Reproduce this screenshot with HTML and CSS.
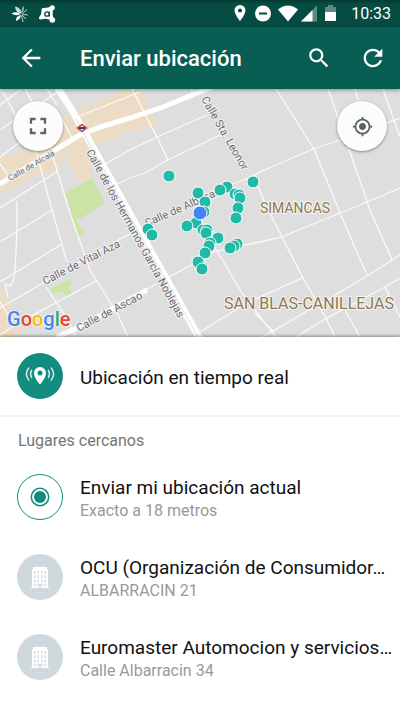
FILE: index.html
```html
<!DOCTYPE html>
<html lang="es">

<head>
    <meta charset="UTF-8">
    <meta name="viewport" content="width=device-width, initial-scale=1.0">
    <title>Enviar ubicación</title>
    <link rel="stylesheet" href="styles.css">
</head>

<body>

    <!-- Barra de estado -->
    <div class="status-bar">
        <div class="status-left">
            <svg width="18" height="18" viewBox="0 0 18 18" fill="#fff">
                <path d="M10.500 8.500Q4.500 8 4 1.500Q10 2.500 10.500 8.500Z" opacity=".8"/>
                <path d="M10.500 8.500Q10 4 12.500 1Q14 5 10.500 8.500Z" opacity=".6"/>
                <path d="M10 9Q5 6 .500 8.500Q5 11.500 10 9Z"/>
                <path d="M10 10Q4.500 11 5 16Q9.500 14.500 10 10Z"/>
                <path d="M11 9L16 4.500M11.500 9.500L17 10M11 10L15 14M10.500 10.500L12 17" stroke="#fff" stroke-width="1" opacity=".75"/>
            </svg>
            <svg width="18" height="18" viewBox="0 0 18 18">
                <path d="M5 4.500Q9 5 14 3Q12 9 14.500 15Q10 11 2.500 13Q5.500 9 5 4.500Z" fill="#fff" stroke="#fff" stroke-width="3" stroke-linejoin="round"/>
                <circle cx="14.300" cy="2.800" r="2.500" fill="#fff"/>
                <circle cx="14.300" cy="15" r="2.800" fill="#fff"/>
                <path d="M11.300 6.500V11.500" stroke="#054c43" stroke-width="1.300"/>
                <circle cx="9" cy="9" r="2.200" fill="none" stroke="#054c43" stroke-width="1.300"/>
            </svg>
        </div>
        <div class="status-right">
            <svg class="pin" width="12" height="17" viewBox="0 0 12 17">
                <path d="M6 0A5.500 5.500 0 0 0 .500 5.500C.500 9.500 6 16 6 16S11.500 9.500 11.500 5.500A5.500 5.500 0 0 0 6 0ZM6 7.500A2 2 0 1 1 6 3.500A2 2 0 0 1 6 7.500Z" fill="#fff"/>
            </svg>
            <svg class="silent" width="16" height="17" viewBox="0 0 16 17">
                <circle cx="8" cy="8.500" r="8" fill="#fff"/>
                <path d="M4 8.500H12" stroke="#054c43" stroke-width="2"/>
            </svg>
            <svg width="20" height="17" viewBox="0 0 20 17">
                <path d="M0 4.500Q10-3.500 20 4.500L10 16.500Z" fill="#fff"/>
            </svg>
            <svg width="16" height="17" viewBox="0 0 16 17">
                <path d="M0 16.500L16 .500V16.500Z" fill="#fff" opacity=".35"/>
                <path d="M0 16.500L11.500 5V16.500Z" fill="#fff"/>
            </svg>
            <svg class="battery" width="11" height="17" viewBox="0 0 11 17">
                <path d="M0 2H3V0H8V2H11V7H0Z" fill="#fff" opacity=".35"/>
                <path d="M0 7H11V16H0Z" fill="#fff"/>
            </svg>
            <span class="clock">10:33</span>
        </div>
    </div>

    <!-- Cabecera -->
    <header class="app-bar">
        <button class="icon-btn" aria-label="Volver">
            <svg width="28" height="28" viewBox="0 0 24 24"><path d="M20 11H7.830l5.590-5.590L12 4l-8 8 8 8 1.410-1.410L7.830 13H20v-2z" fill="#fff"/></svg>
        </button>
        <h1>Enviar ubicación</h1>
        <button class="icon-btn" aria-label="Buscar">
            <svg width="26" height="26" viewBox="0 0 24 24"><path d="M15.500 14h-.790l-.280-.270C15.410 12.590 16 11.110 16 9.500 16 5.910 13.090 3 9.500 3S3 5.910 3 9.500 5.910 16 9.500 16c1.610 0 3.090-.590 4.230-1.570l.270.280v.790l5 4.990L20.490 19l-4.990-5zm-6 0C7.010 14 5 11.990 5 9.500S7.010 5 9.500 5 14 7.010 14 9.500 11.990 14 9.500 14z" fill="#fff"/></svg>
        </button>
        <button class="icon-btn" aria-label="Actualizar">
            <svg width="28" height="28" viewBox="0 0 24 24"><path d="M17.650 6.350C16.200 4.900 14.210 4 12 4c-4.420 0-7.990 3.580-7.990 8s3.570 8 7.990 8c3.730 0 6.840-2.550 7.730-6h-2.080c-.820 2.330-3.040 4-5.650 4-3.310 0-6-2.690-6-6s2.690-6 6-6c1.660 0 3.140.690 4.220 1.780L13 11h7V4l-2.350 2.350z" fill="#fff"/></svg>
        </button>
    </header>

    <!-- Mapa -->
    <section class="map">
        <svg class="map-canvas" viewBox="0 0 400 248" preserveAspectRatio="xMidYMid slice">
            <!-- Zonas comerciales y parques -->
            <g fill="#ecdcc6">
                <path d="M82 19L128 0H140L158 33L150 41L138 41L127 43L113 51L90 56L92 89L80 94L63 61L58 86L43 84L33 89L20 94L0 106V69L20 63L63 29Z"/>
                <path d="M0 198L7 208L10 218L25 241L15 248H0Z"/>
            </g>
            <g fill="#cbe4a5">
                <path d="M65 104L92 89L105 114L76 132L86 144L78 148Z"/>
                <path d="M50 200L71 189L72 195L68 199L72 204L68 208L63 203L53 204Z"/>
            </g>

            <!-- Calles pequeñas -->
            <g class="streets">
                <path d="M0 16L20 1M0 41L37 16L62 1M0 68L20 53L56 29M3 3L37 66L52 121L67 173M25 0L45 38L53 68L70 124L90 181L117 224L128 248"/>
                <path d="M47 0L57 16M60 26L72 49M0 75L8 86M0 119L58 82M77 28L140 3M103 76L130 61L157 48L207 26M115 96L130 89L147 83L168 71L220 46M132 0L157 48L168 71M192 0V8"/>
                <path d="M0 153L52 121M0 193L62 155M17 112V140L15 181Q14 194 10 197L5 195L8 209M0 219L43 194L122 149L132 144M46 198L68 231L76 248M0 246L20 233L37 224L98 191M0 213L12 232"/>
                <path d="M230 96L253 87L260 83L313 60L340 51L400 29M253 87L265 113M276 0L314 60L340 124M340 124L367 186M328 0L350 63L370 121L392 171M355 0L358 11M383 0L400 48"/>
                <path d="M145 201L167 189L197 173L213 163L240 157L260 153L282 148L340 124L367 113L400 99M262 108L282 148L303 189L326 229L335 248M200 243L247 214L302 189M400 166L367 187L330 209L273 242L262 248"/>
                <path d="M400 189L385 198L327 229L296 248M385 198L400 228M255 224L273 242M345 221L360 248M213 156L220 167L242 204L268 238L276 248"/>
            </g>

            <!-- Avenidas -->
            <g class="avenues">
                <path d="M0 95L55 61L80 46L100 38L130 29L163 18L212 -2"/>
                <path class="wide" d="M57 -2L72 21L86 46L200 250"/>
                <path d="M57 248L77 239L147 201"/>
            </g>
            <path d="M76 30L90 56L199 250" fill="none" stroke="#dedede" stroke-width="1"/>

            <!-- Metro -->
            <path d="M82 35.500L86.500 39L82 42.500L77.500 39Z" fill="#fff" stroke="#e0392f" stroke-width="1.500"/>
            <path d="M79 37.800H85V40.300H79Z" fill="#1b4f91"/>

            <!-- Nombres de las calles -->
            <g class="street-names">
                <text class="small" transform="translate(10 92) rotate(-30)">Calle de Alcalá</text>
                <text transform="translate(86 63) rotate(61)">Calle de los Hermanos García Noblejas</text>
                <text transform="translate(201 10) rotate(60)">Calle Sta. Leonor</text>
                <text transform="translate(147 138) rotate(-24)">Calle de Albasanz</text>
                <text transform="translate(45 196) rotate(-27)">Calle de Vital Aza</text>
                <text transform="translate(79 243) rotate(-28)">Calle de Ascao</text>
            </g>
            <g class="districts">
                <text x="260" y="124">SIMANCAS</text>
                <text class="big" x="224" y="220">SAN BLAS-CANILLEJAS</text>
            </g>

            <!-- Lugares -->
            <g class="places">
                <circle cx="169" cy="87" r="6"/>
                <circle cx="198" cy="104" r="6"/>
                <circle cx="227" cy="98" r="6"/>
                <circle cx="220" cy="101" r="6"/>
                <circle cx="253" cy="93" r="6"/>
                <circle cx="235" cy="105" r="6"/>
                <circle cx="239" cy="106" r="6"/>
                <circle cx="240" cy="109" r="6"/>
                <circle cx="238" cy="119" r="6"/>
                <circle cx="236" cy="129" r="6"/>
                <circle cx="148" cy="140" r="6"/>
                <circle cx="152" cy="146" r="6"/>
                <circle cx="196" cy="134" r="6"/>
                <circle cx="187" cy="137" r="6"/>
                <circle cx="203" cy="141" r="6"/>
                <circle cx="207" cy="141" r="6"/>
                <circle cx="206" cy="144" r="6"/>
                <circle cx="218" cy="149" r="6"/>
                <circle cx="210" cy="154" r="6"/>
                <circle cx="209" cy="157" r="6"/>
                <circle cx="205" cy="164" r="6"/>
                <circle cx="198" cy="173" r="6"/>
                <circle cx="202" cy="180" r="6"/>
                <circle cx="237" cy="155" r="6"/>
                <circle cx="234" cy="157" r="6"/>
                <circle cx="230" cy="159" r="6"/>
                <circle cx="205" cy="113" r="6"/>
                <circle cx="204" cy="123" r="6"/>
                <circle class="me" cx="200" cy="124" r="7"/>
            </g>
        </svg>

        <button class="map-btn expand" aria-label="Pantalla completa">
            <svg width="28" height="28" viewBox="0 0 24 24"><path d="M7 14H5v5h5v-2H7v-3zm-2-4h2V7h3V5H5v5zm12 7h-3v2h5v-5h-2v3zM14 5v2h3v3h2V5h-5z" fill="#5b6668"/></svg>
        </button>
        <button class="map-btn locate" aria-label="Mi ubicación">
            <svg width="21" height="21" viewBox="0 0 24 24"><path d="M12 8c-2.210 0-4 1.790-4 4s1.790 4 4 4 4-1.790 4-4-1.790-4-4-4zm8.940 3c-.460-4.170-3.770-7.480-7.940-7.940V1h-2v2.060C6.830 3.520 3.520 6.830 3.060 11H1v2h2.060c.460 4.170 3.770 7.480 7.940 7.940V23h2v-2.060c4.170-.460 7.480-3.770 7.940-7.940H23v-2h-2.060zM12 19c-3.870 0-7-3.130-7-7s3.130-7 7-7 7 3.130 7 7-3.130 7-7 7z" fill="#566163"/></svg>
        </button>
        <div class="google"><span class="blue">G</span><span class="red">o</span><span class="yellow">o</span><span class="blue">g</span><span class="green">l</span><span class="red">e</span></div>
    </section>

    <!-- Lista de lugares -->
    <main class="sheet">
        <button class="row live">
            <svg class="avatar" width="46" height="46" viewBox="0 0 46 46">
                <circle cx="23" cy="23" r="23" fill="#128c7e"/>
                <path d="M23 14A6 6 0 0 0 17 20C17 25 23 31.500 23 31.500S29 25 29 20A6 6 0 0 0 23 14ZM23 22.500A2.500 2.500 0 1 1 23 17.500A2.500 2.500 0 0 1 23 22.500Z" fill="#fff"/>
                <path d="M14.800 17Q12.400 21 14.800 25M12 14.500Q6.800 21 12 27.500M31.200 17Q33.600 21 31.200 25M34 14.500Q39.200 21 34 27.500" fill="none" stroke="#d5edea" stroke-width="1.500"/>
            </svg>
            <span class="info"><span class="name">Ubicación en tiempo real</span></span>
        </button>

        <h2>Lugares cercanos</h2>

        <button class="row">
            <svg class="avatar" width="46" height="46" viewBox="0 0 46 46">
                <circle cx="23" cy="23" r="22.500" fill="#fff" stroke="#128c7e"/>
                <circle cx="23" cy="23" r="8.700" fill="#fff" stroke="#128c7e" stroke-width="1.500"/>
                <circle cx="23" cy="23" r="6" fill="#128c7e"/>
            </svg>
            <span class="info">
                <span class="name">Enviar mi ubicación actual</span>
                <span class="detail">Exacto a 18 metros</span>
            </span>
        </button>

        <button class="row">
            <svg class="avatar" width="46" height="46" viewBox="0 0 46 46">
                <circle cx="23" cy="23" r="23" fill="#cfd8dd"/>
                <path d="M16 13H30V15H31V33H32V34H14V33H15V15H16Z" fill="#fff"/>
                <path d="M17 18H29.500M17 22.500H29.500M17 27H29.500M17 31H29.500" stroke="#cfd8dd" stroke-width="2.500" stroke-dasharray="1.500 2"/>
                <path d="M23 30V34" stroke="#cfd8dd" stroke-width="1.500"/>
            </svg>
            <span class="info">
                <span class="name">OCU (Organización de Consumidor…</span>
                <span class="detail">ALBARRACIN 21</span>
            </span>
        </button>

        <button class="row">
            <svg class="avatar" width="46" height="46" viewBox="0 0 46 46">
                <circle cx="23" cy="23" r="23" fill="#cfd8dd"/>
                <path d="M16 13H30V15H31V33H32V34H14V33H15V15H16Z" fill="#fff"/>
                <path d="M17 18H29.500M17 22.500H29.500M17 27H29.500M17 31H29.500" stroke="#cfd8dd" stroke-width="2.500" stroke-dasharray="1.500 2"/>
                <path d="M23 30V34" stroke="#cfd8dd" stroke-width="1.500"/>
            </svg>
            <span class="info">
                <span class="name">Euromaster Automocion y servicios…</span>
                <span class="detail">Calle Albarracin 34</span>
            </span>
        </button>
    </main>

</body>

</html>
```
FILE: styles.css
```css
/* Style global */
* {
    box-sizing: border-box;
}

body {
    margin: 0;
    background-color: #fff;
    font-family: Roboto, "Liberation Sans", sans-serif;
}

button {
    padding: 0;
    border: none;
    background: none;
    font-family: inherit;
    cursor: pointer;
}

svg {
    display: block;
}

/* Barra de estado */
.status-bar {
    display: flex;
    justify-content: space-between;
    align-items: center;
    height: 27px;
    padding: 0 9px 0 11px;
    background: linear-gradient(#03382f, #054c43 4px);
    color: #fff;
}

.status-left,
.status-right {
    display: flex;
    align-items: center;
}

.status-left {
    gap: 9px;
}

.status-right {
    gap: 3px;
}

.pin {
    margin-right: 6px;
}

.silent {
    margin-right: 4px;
}

.battery {
    margin: 0 12px 0 5px;
}

.clock {
    font-size: 16px;
    line-height: 20px;
}

/* Cabecera */
.app-bar {
    display: flex;
    align-items: center;
    height: 62px;
    padding: 0 13px 0 17px;
    background-color: #095e54;
    color: #fff;
    position: relative;
    z-index: 1;
    box-shadow: 0 1px 4px rgba(0, 0, 0, 0.4);
}

.app-bar h1 {
    flex: 1;
    margin: 0 0 0 35px;
    font-size: 22px;
    font-weight: 500;
    line-height: 28px;
    padding-top: 2px;
}

.app-bar .icon-btn + .icon-btn {
    margin-left: 27px;
}

/* Mapa */
.map {
    position: relative;
    height: 248px;
    overflow: hidden;
    background-color: #dedede;
}

.map-canvas {
    width: 100%;
    height: 100%;
}

.streets path {
    fill: none;
    stroke: #fafafa;
    stroke-width: 1.3;
}

.avenues path {
    fill: none;
    stroke: #fff;
    stroke-width: 5;
}

.avenues .wide {
    stroke-width: 7;
}

.street-names text {
    font-size: 11px;
    fill: #6b6b6b;
    stroke: #f2f2f2;
    stroke-width: 2;
    paint-order: stroke;
}

.street-names .small {
    font-size: 8px;
}

.districts text {
    font-size: 14px;
    fill: #8f7850;
    stroke: #f5f5f5;
    stroke-width: 2;
    paint-order: stroke;
}

.districts .big {
    font-size: 16px;
}

.places circle {
    fill: #1fbba6;
    stroke: #fff;
    stroke-width: 1;
}

.places .me {
    fill: #4285f4;
}

.map-btn {
    position: absolute;
    top: 12px;
    display: flex;
    justify-content: center;
    align-items: center;
    width: 50px;
    height: 50px;
    border-radius: 50%;
    background-color: #fcfcfc;
    box-shadow: 0 1px 3px rgba(0, 0, 0, 0.4);
}

.expand {
    left: 13px;
}

.locate {
    right: 13px;
}

.google {
    position: absolute;
    left: 7px;
    bottom: 6px;
    font-size: 20px;
    font-weight: 500;
    line-height: 24px;
    text-shadow: 0 0 2px #fff, 0 0 2px #fff;
}

.google .blue {
    color: #4285f4;
}

.google .red {
    color: #ea4335;
}

.google .yellow {
    color: #fbbc05;
}

.google .green {
    color: #34a853;
}

/* Lista de lugares */
.sheet {
    position: relative;
    background-color: #fff;
    box-shadow: 0 -1px 3px rgba(0, 0, 0, 0.4);
}

.sheet h2 {
    margin: 0;
    padding: 14px 18px 6px;
    font-size: 16px;
    font-weight: normal;
    line-height: 20px;
    color: #757575;
}

.row {
    display: flex;
    align-items: center;
    gap: 17px;
    width: 100%;
    height: 80px;
    padding: 0 0 0 17px;
    text-align: left;
}

.live {
    border-bottom: 2px solid #f0f0f0;
}

.avatar {
    flex: none;
}

.info {
    flex: 1;
    min-width: 0;
    padding-top: 4px;
}

.name,
.detail {
    display: block;
    overflow: hidden;
    white-space: nowrap;
    text-overflow: ellipsis;
}

.name {
    font-size: 19px;
    line-height: 24px;
    color: #111;
}

.detail {
    font-size: 16px;
    line-height: 22px;
    color: #999;
}
```
